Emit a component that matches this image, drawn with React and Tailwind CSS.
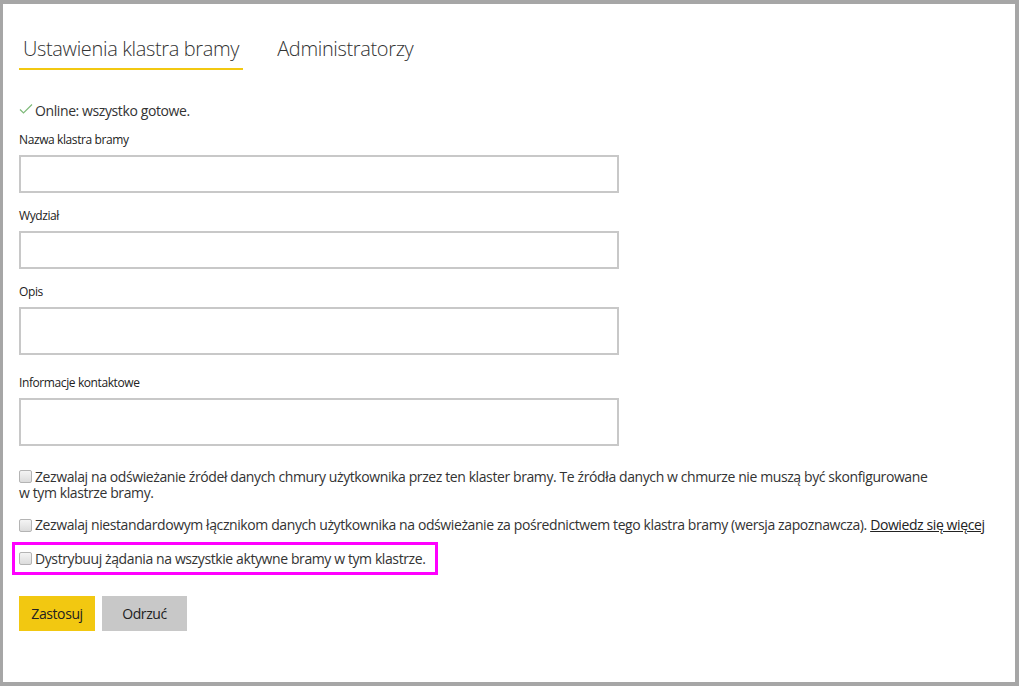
import React from "react";

const font = { fontFamily: "'Open Sans', 'Noto Sans', sans-serif" };

function Box() {
  return (
    <span className="inline-block w-[13px] h-[13px] shrink-0 rounded-[2px] border border-[#b4b4b4] bg-gradient-to-b from-[#f4f4f4] to-[#dcdcdc]" />
  );
}

function Field({ label, h, mt }) {
  return (
    <div className={mt}>
      <div className="text-[12px] leading-[16px] text-[#222] tracking-[-0.4px]">{label}</div>
      <div className={`mt-[7px] w-[600px] border-2 border-[#c8c8c8] bg-white ${h}`} />
    </div>
  );
}

export default function App() {
  return (
    <div className="w-[1019px] h-[686px] bg-[#a6a6a6] pt-[4px] pl-[3px] pr-[4px] pb-[4px]" style={font}>
      <div className="w-full h-full bg-white pl-[16px]">
        <div className="flex gap-[34px] pt-[31px]">
          <div className="flex flex-col">
            <div className="px-[4px] text-[20px] leading-[28px] text-[#333] font-light tracking-[-0.35px]">Ustawienia klastra bramy</div>
            <div className="mt-[5px] h-[2px] bg-[#f2c811]" />
          </div>
          <div className="text-[20px] leading-[28px] text-[#333] font-light tracking-[-0.35px]">Administratorzy</div>
        </div>
        <div className="mt-[32px] flex items-center gap-[2px] text-[14px] leading-[18px] text-[#333] tracking-[-0.4px]">
          <svg width="14" height="12" viewBox="0 0 14 12" className="mt-[-4px]">
            <path d="M1 6.5 L4.5 10 L13 1.5" fill="none" stroke="#7fba7a" strokeWidth="1.2" />
          </svg>
          <span>Online: wszystko gotowe.</span>
        </div>
        <Field label="Nazwa klastra bramy" h="h-[38px]" mt="mt-[12px]" />
        <Field label="Wydział" h="h-[38px]" mt="mt-[15px]" />
        <Field label="Opis" h="h-[48px]" mt="mt-[15px]" />
        <Field label="Informacje kontaktowe" h="h-[48px]" mt="mt-[20px]" />
        <div className="mt-[23px] w-[922px] text-[14px] leading-[16px] text-[#333] tracking-[-0.4px]">
          <div>
            <span className="inline-flex align-[-1px] mr-[3px]"><Box /></span>
            Zezwalaj na odświeżanie źródeł danych chmury użytkownika przez ten klaster bramy. Te źródła danych w chmurze nie muszą być skonfigurowane w tym klastrze bramy.
          </div>
        </div>
        <div className="mt-[16px] flex items-center gap-[3px] text-[14px] leading-[16px] text-[#333] tracking-[-0.4px]">
          <Box />
          <span>
            Zezwalaj niestandardowym łącznikom danych użytkownika na odświeżanie za pośrednictwem tego klastra bramy (wersja zapoznawcza).{" "}
            <span className="underline text-[#222]">Dowiedz się więcej</span>
          </span>
        </div>
        <div className="mt-[9px] ml-[-7px] w-[426px] h-[33px] border-[3px] border-[#ff00ff] flex items-center gap-[3px] pl-[4px] text-[14px] leading-[16px] text-[#333] tracking-[-0.4px]">
          <Box />
          <span>Dystrybuuj żądania na wszystkie aktywne bramy w tym klastrze.</span>
        </div>
        <div className="mt-[21px] flex gap-[7px]">
          <button className="w-[76px] h-[35px] bg-[#f2c811] text-[14px] text-[#222] tracking-[-0.4px]">Zastosuj</button>
          <button className="w-[85px] h-[35px] bg-[#c8c8c8] text-[14px] text-[#222] tracking-[-0.4px]">Odrzuć</button>
        </div>
      </div>
    </div>
  );
}
